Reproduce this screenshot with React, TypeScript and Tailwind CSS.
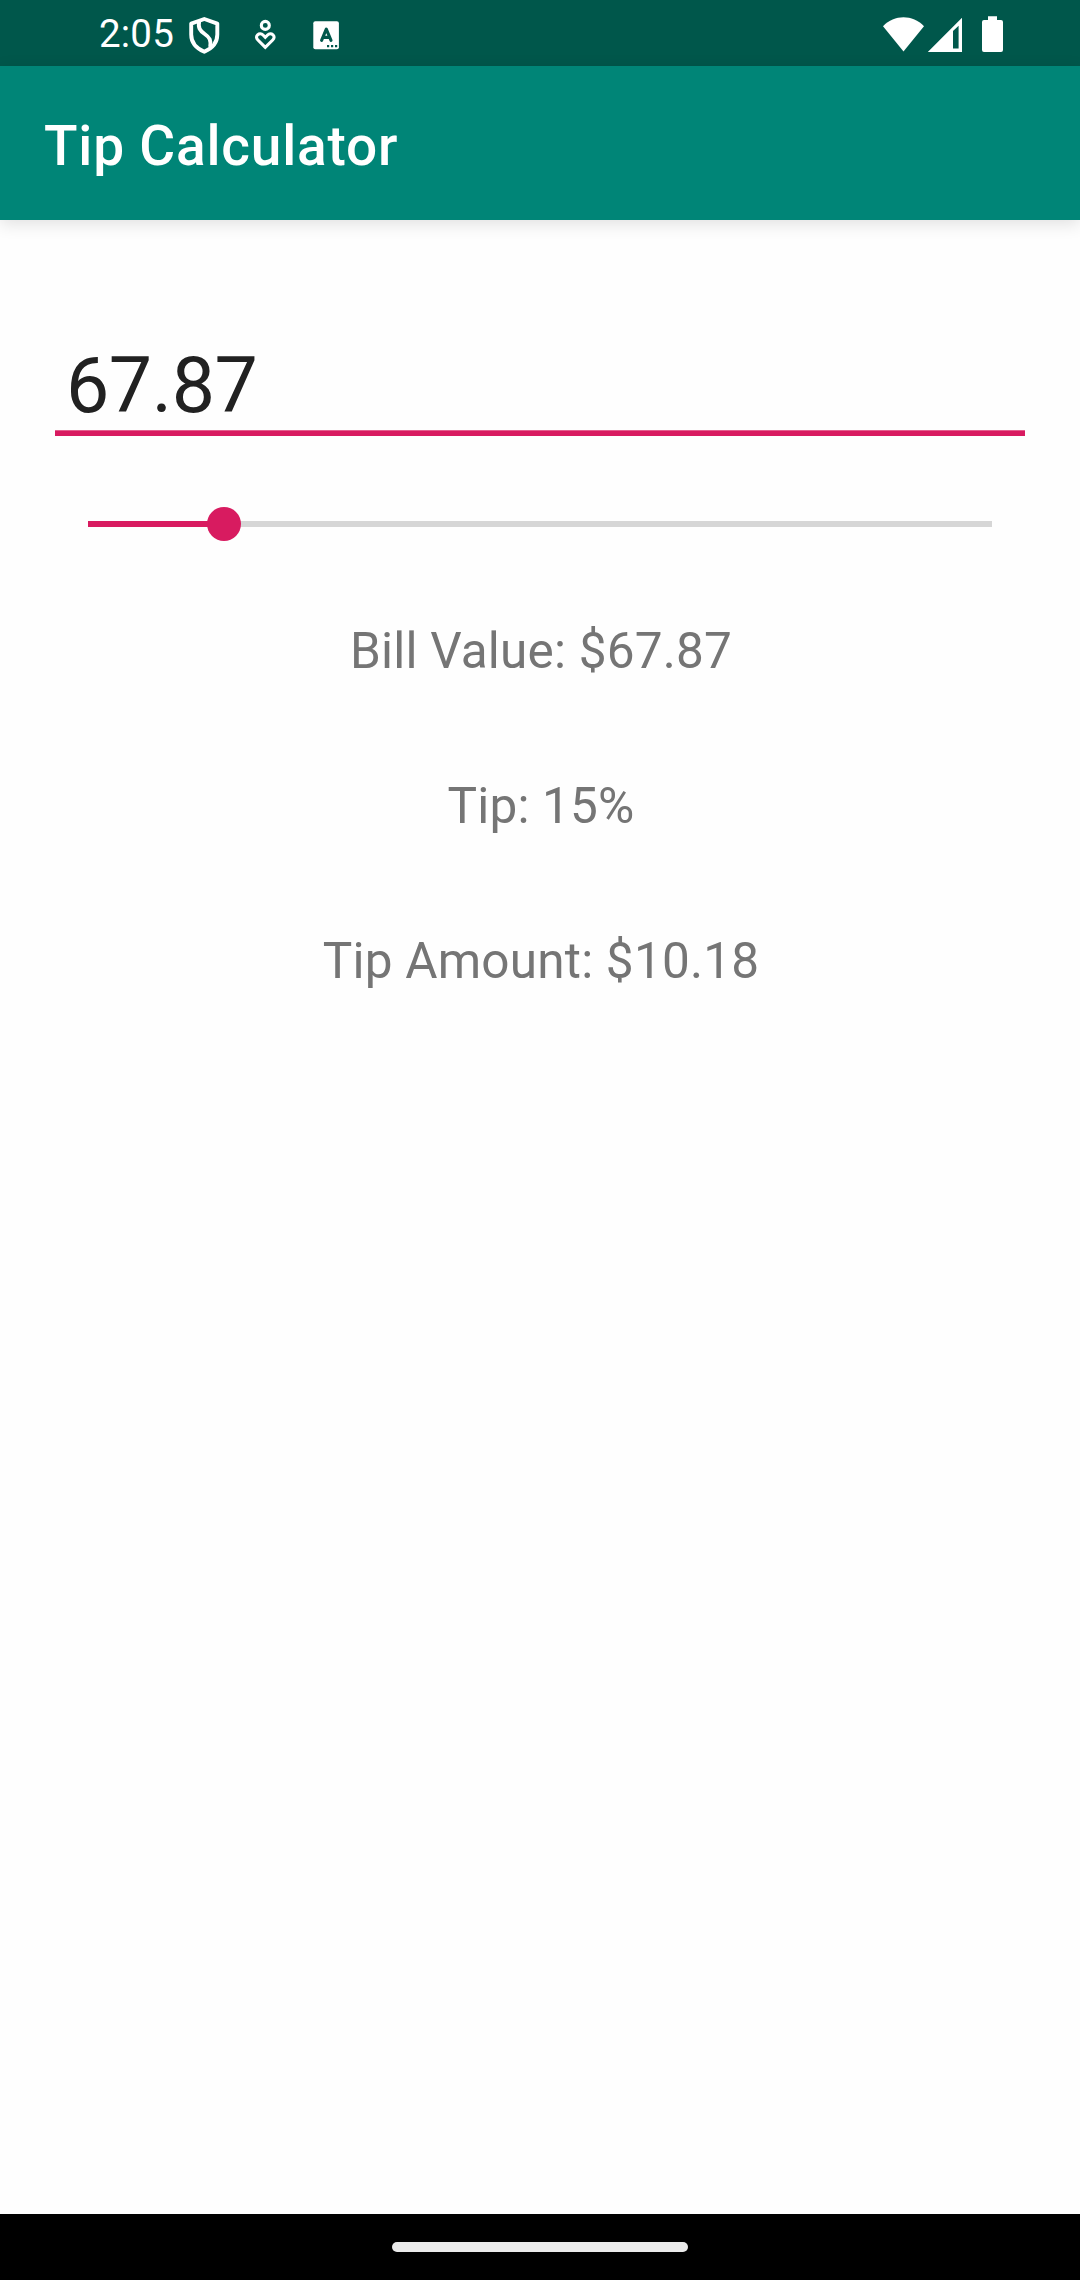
import { useState } from "react";

function ShieldIcon() {
  return (
    <svg className="ml-4 h-[38px] w-8 shrink-0" viewBox="188 16 32 38" fill="none" stroke="#fff" strokeWidth="3.9" strokeLinejoin="round">
      <path d="M204.3 19 L217.3 23.6 V34.5 C217.3 42.5 212.5 48.2 204.3 51.7 C196 48.2 191.2 42.5 191.2 34.5 V23.6 Z" />
      <path d="M199.2 21 C197.8 28 200 30.8 204.7 34 C209.8 37.4 211.2 40.5 210.2 47" />
    </svg>
  );
}

function HeartPersonIcon() {
  return (
    <svg className="ml-[34px] h-[38px] w-6 shrink-0" viewBox="254 16 24 38" fill="none" stroke="#fff" strokeWidth="3.1">
      <circle cx="265.3" cy="25.4" r="4" />
      <path d="M265.3 47.4 L257.9 40 C256.1 38.2 256.1 36.2 257.6 34.8 C259.2 33.4 261.5 33.5 263 35 L265.3 37.3 L267.6 35 C269.1 33.5 271.4 33.4 273 34.8 C274.5 36.2 274.5 38.2 272.7 40 Z" />
    </svg>
  );
}

function LetterBadgeIcon() {
  return (
    <svg className="ml-[35px] h-[38px] w-[26px] shrink-0" viewBox="313 16 26 38">
      <rect x="313.3" y="21.2" width="25.6" height="28" rx="2" fill="#fff" />
      <path d="M321.6 40.4 L326.3 29.2 L331 40.4 M323.4 37.4 H329.2" fill="none" stroke="#00574b" strokeWidth="3.1" strokeLinecap="round" strokeLinejoin="round" />
      <path d="M327 45 h2.2 v2.3 h-2.2z M331 45 h2.2 v2.3 h-2.2z M335 45 h2.2 v2.3 h-2.2z" fill="#00574b" />
    </svg>
  );
}

function WifiIcon() {
  return (
    <svg className="h-[38px] w-[42px]" viewBox="883 16 42 38" fill="#fff">
      <path d="M883 26.2 C894.5 14.4 912.5 14.4 924 26.2 L903.5 51.6 Z" />
    </svg>
  );
}

function SignalIcon() {
  return (
    <svg className="ml-[2px] h-[38px] w-9" viewBox="927 16 36 38" fill="#fff">
      <path fillRule="evenodd" d="M927.8 52 L962 17.8 V52 Z M953 31 V48.6 H958.6 V25.7 Z" />
    </svg>
  );
}

function BatteryIcon() {
  return (
    <svg className="ml-[18px] h-[38px] w-6" viewBox="981 16 24 38" fill="#fff">
      <path d="M988 16.3 H997 V20 H1001 Q1003 20 1003 22 V50 Q1003 52 1001 52 H984 Q982 52 982 50 V22 Q982 20 984 20 H988 Z" />
    </svg>
  );
}

function StatusBar() {
  return (
    <div className="flex h-[66px] items-start bg-[#00574b] pl-[99px] pr-[75px] text-white">
      <span className="mt-[11px] w-[73px] shrink-0 whitespace-nowrap text-[38.5px] leading-[46px] tracking-[0.2px]">2:05</span>
      <div className="flex flex-1 items-start pt-4">
        <ShieldIcon />
        <HeartPersonIcon />
        <LetterBadgeIcon />
      </div>
      <div className="flex items-start pt-4">
        <WifiIcon />
        <SignalIcon />
        <BatteryIcon />
      </div>
    </div>
  );
}

function TipSlider({ percent }: { percent: number }) {
  return (
    <div className="mx-[88px] mt-[71px] flex h-[34px] items-center">
      <div className="h-1.5 bg-[#d81b60]" style={{ width: `${percent}%` }} />
      <div className="relative z-10 -mx-[17px] size-[34px] shrink-0 rounded-full bg-[#d81b60]" />
      <div className="h-1.5 flex-1 bg-[#d6d6d6]" />
    </div>
  );
}

export default function App() {
  const [bill, setBill] = useState("67.87");
  const percent = 15;
  const amount = Number(bill) || 0;
  return (
    <div className="flex h-[2280px] w-[1080px] flex-col overflow-hidden bg-[#fefefe] font-['Roboto',sans-serif]">
      <StatusBar />
      <header className="h-[154px] shrink-0 bg-[#008577] pl-11 pt-[48px] shadow-[0_4px_16px_rgba(0,0,0,0.12)]">
        <h1 className="text-[55px] font-medium leading-[64px] tracking-[0.8px] text-white">Tip Calculator</h1>
      </header>
      <main className="flex flex-1 flex-col">
        <div className="mx-[55px] mt-[122px] flex flex-col">
          <input
            className="h-[88px] w-full bg-transparent pl-[11px] text-[77px] leading-[88px] tracking-[-0.4px] text-[#212121] outline-none"
            value={bill}
            onChange={(e) => setBill(e.target.value)}
          />
          <div className="h-1.5 border-t border-[#e4608f] bg-[#d81b60]" />
        </div>
        <TipSlider percent={percent} />
        <div className="mt-[81px] flex flex-col items-center gap-[97px] pl-0.5 text-[49.5px] leading-[58px] tracking-[0.2px] text-[#757575]">
          <p>Bill Value: ${amount.toFixed(2)}</p>
          <p>Tip: {percent}%</p>
          <p>Tip Amount: ${((amount * percent) / 100).toFixed(2)}</p>
        </div>
      </main>
      <footer className="flex h-[66px] justify-center bg-black pt-7">
        <div className="h-2.5 w-[296px] rounded-full bg-[#ebebeb]" />
      </footer>
    </div>
  );
}
